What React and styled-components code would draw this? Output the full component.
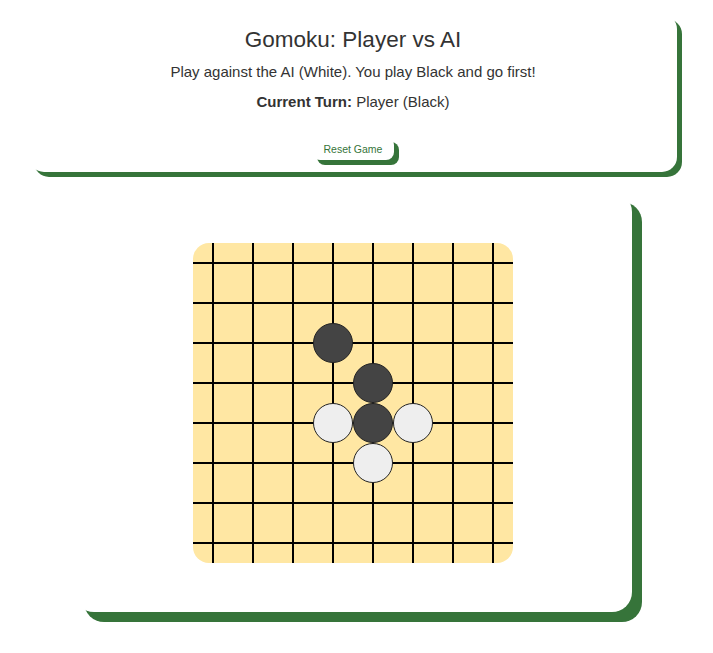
import React, { useState } from 'react';
import styled, { createGlobalStyle } from 'styled-components';

const GREEN = '#36743a';
const SIZE = 8;

const GlobalStyle = createGlobalStyle`
  body {
    margin: 0;
    background: #fff;
    font-family: 'Liberation Sans', Arial, sans-serif;
    font-size: 15px;
    color: #333;
  }
`;

const Page = styled.div`
  width: 706px;
  padding: 14px 0 30px;
  display: flex;
  flex-direction: column;
  align-items: center;
  gap: 20px;
`;

const InfoCard = styled.div`
  box-sizing: border-box;
  width: 648px;
  padding: 12px 20px;
  background: #fff;
  border-radius: 15px;
  box-shadow: 5px 5px 0 ${GREEN};
  text-align: center;
`;

const Title = styled.h1`
  margin: 0;
  font-size: 22.5px;
  font-weight: normal;
  line-height: normal;
  padding-top: 0.5px;
`;

const Subtitle = styled.p`
  margin: 10px 0 0;
`;

const Turn = styled.p`
  margin: 13.5px 0 0;

  strong {
    font-weight: bold;
  }
`;

const ResetButton = styled.button`
  margin-top: 27px;
  height: 23px;
  padding: 0 12px;
  border: none;
  border-radius: 8px;
  background: #fff;
  color: ${GREEN};
  font-family: inherit;
  font-size: 10.5px;
  box-shadow: 5px 5px 0 ${GREEN};
  cursor: pointer;
`;

const BoardCard = styled.div`
  box-sizing: border-box;
  width: 558px;
  height: 420px;
  padding-top: 51px;
  background: #fff;
  border-radius: 20px;
  box-shadow: 10px 10px 0 ${GREEN};
  display: flex;
  justify-content: center;
  align-items: flex-start;
`;

const Board = styled.div`
  display: grid;
  grid-template-columns: repeat(${SIZE}, 40px);
  grid-auto-rows: 40px;
  background: #ffe7a3;
  border-radius: 16px;
  overflow: hidden;
`;

const Cell = styled.div`
  display: flex;
  align-items: center;
  justify-content: center;
  background:
    linear-gradient(#000, #000) center / 100% 2px no-repeat,
    linear-gradient(#000, #000) center / 2px 100% no-repeat;
  cursor: pointer;
`;

const Stone = styled.div`
  width: 38px;
  height: 38px;
  border-radius: 50%;
  border: 1px solid #222;
  background: ${(props) => (props.color === 'black' ? '#444' : '#eee')};
`;

const initialStones = {
  '2-3': 'black',
  '3-4': 'black',
  '4-4': 'black',
  '4-3': 'white',
  '4-5': 'white',
  '5-4': 'white',
};

const App = () => {
  const [stones, setStones] = useState(initialStones);

  const cells = [];
  for (let r = 0; r < SIZE; r++) {
    for (let c = 0; c < SIZE; c++) {
      const key = `${r}-${c}`;
      cells.push(
        <Cell key={key}>{stones[key] && <Stone color={stones[key]} />}</Cell>
      );
    }
  }

  return (
    <>
      <GlobalStyle />
      <Page>
        <InfoCard>
          <Title>Gomoku: Player vs AI</Title>
          <Subtitle>
            Play against the AI (White). You play Black and go first!
          </Subtitle>
          <Turn>
            <strong>Current Turn:</strong> Player (Black)
          </Turn>
          <ResetButton onClick={() => setStones({})}>Reset Game</ResetButton>
        </InfoCard>
        <BoardCard>
          <Board>{cells}</Board>
        </BoardCard>
      </Page>
    </>
  );
};

export default App;
